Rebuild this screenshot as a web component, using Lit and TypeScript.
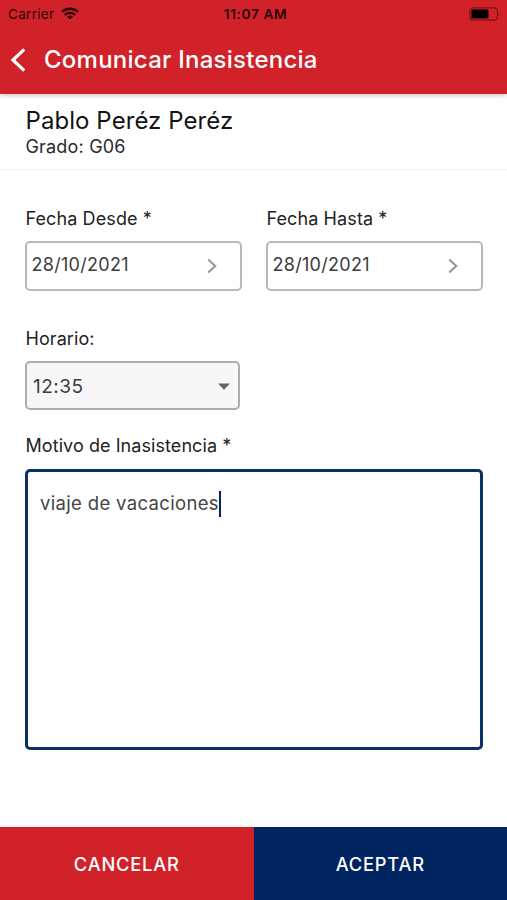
import { LitElement, html, css } from "lit";
import { customElement, property } from "lit/decorators.js";

@customElement("date-field")
class DateField extends LitElement {
  @property() label = "";
  @property() value = "";
  static styles = css`
    :host { display: block; width: 217px; }
    .label { height: 24px; padding: 1px 0 0 0.5px; line-height: 24px; font-size: 18px; color: #222; white-space: nowrap; letter-spacing: 0.1px; }
    .box {
      box-sizing: border-box; display: flex; align-items: center; justify-content: space-between;
      height: 50px; margin-top: 10px; padding: 0 21px 0 4px;
      border: 2px solid #b9b9b9; border-radius: 5px; background: #fff;
    }
    .value { font-size: 18px; line-height: 24px; color: #3c3c3c; padding: 0 0 2px 0.5px; letter-spacing: 0.3px; }
    svg { display: block; }
  `;
  render() {
    return html`
      <div class="label">${this.label}</div>
      <div class="box">
        <span class="value">${this.value}</span>
        <svg width="14" height="16" viewBox="0 0 14 16" fill="none" stroke="#969696" stroke-width="2.1">
          <path d="M3.2 1.5L10.2 8L3.2 14.5" />
        </svg>
      </div>
    `;
  }
}

@customElement("app-root")
class AppRoot extends LitElement {
  static styles = css`
    :host {
      display: flex; flex-direction: column; width: 507px; height: 900px; overflow: hidden;
      background: #fff; font-family: Inter, "Liberation Sans", sans-serif; color: #222;
    }
    svg { display: block; }
    header { flex: none; height: 94px; background: #d12229; box-shadow: 0 1px 5px rgba(0, 0, 0, 0.25); }
    .status {
      display: grid; grid-template-columns: 1fr auto 1fr; align-items: center;
      height: 28px; padding: 0 6px 0 8px; color: #2b0507; font-size: 13.5px; line-height: 18px;
    }
    .carrier { display: flex; align-items: center; gap: 7px; letter-spacing: 0.3px; }
    .carrier svg { margin-bottom: 1px; }
    .time { padding-left: 2px; font-size: 13.7px; font-weight: 600; letter-spacing: 0.6px; }
    .battery { justify-self: end; margin-bottom: 1px; }
    .bar { display: flex; align-items: center; height: 64px; padding-left: 9px; color: #fff; }
    .title { margin-left: 17px; font-size: 24px; font-weight: 500; line-height: 30px; white-space: nowrap; letter-spacing: 0.25px; }
    .student { flex: none; box-sizing: border-box; height: 76px; padding: 13px 25.5px 0; border-bottom: 1px solid #f0f0f0; }
    .name { height: 28px; line-height: 28px; font-size: 24px; color: #141414; letter-spacing: 0.07px; }
    .grade { height: 22px; line-height: 23px; font-size: 18px; color: #2a2a2a; letter-spacing: 0.18px; }
    form { flex: 1; padding: 36px 24px 0 25px; }
    .dates { display: flex; justify-content: space-between; }
    .label { height: 24px; line-height: 24px; font-size: 18px; white-space: nowrap; padding-left: 0.5px; letter-spacing: 0.07px; }
    .hour { margin-top: 36px; }
    .select {
      box-sizing: border-box; display: flex; align-items: center; justify-content: space-between;
      width: 215px; height: 49px; margin-top: 10px; padding: 0 8px 0 6px;
      border: 2px solid #adadad; border-radius: 5px; background: #f7f7f7; font-size: 19px; letter-spacing: 0.5px; color: #3c3c3c;
    }
    .select span { padding-top: 1px; }
    .select svg { margin-top: 1px; }
    .reason { margin-top: 24px; }
    .area {
      box-sizing: border-box; display: flex; height: 281px; margin-top: 11px; padding: 19px 12px;
      border: 3px solid #0d2f68; border-radius: 5px; font-size: 18.5px; letter-spacing: 0.34px; line-height: 25px; color: #444;
    }
    .caret { width: 2px; height: 26px; background: #032660; }
    footer { flex: none; display: flex; height: 73px; }
    .btn {
      flex: 1; display: flex; align-items: center; justify-content: center; padding-top: 1px; box-sizing: border-box;
      font-size: 18.3px; font-weight: 500; color: #fff; letter-spacing: 0.8px;
    }
    .cancel { background: #d12229; }
    .accept { background: #002561; }
  `;
  render() {
    return html`
      <header>
        <div class="status">
          <span class="carrier">
            <span>Carrier</span>
            <svg width="18" height="13" viewBox="0 0 18 13" fill="none" stroke="#2b0507" stroke-width="2.3">
              <path d="M1 4.9C5.6 .7 12.4 .7 17 4.9" />
              <path d="M3.8 7.8C6.8 5.1 11.2 5.1 14.2 7.8" />
              <path d="M6 9.6Q9 7.2 12 9.6L9 12.6Z" fill="#2b0507" stroke="none" />
            </svg>
          </span>
          <span class="time">11:07 AM</span>
          <svg class="battery" width="32" height="14" viewBox="0 0 32 14">
            <rect x=".8" y=".8" width="27.6" height="12.4" rx="3.4" fill="none" stroke="#7d1419" stroke-width="1.2" />
            <rect x="2.4" y="2.4" width="17" height="9.2" rx="1.2" fill="#000" />
            <path d="M29.8 4.8Q31.6 7 29.8 9.2Z" fill="#7d1419" />
          </svg>
        </div>
        <div class="bar">
          <svg width="18" height="26" viewBox="0 0 18 26" fill="none" stroke="#fff" stroke-width="3.2">
            <path d="M15.2 2.4L4 13L15.2 23.6" />
          </svg>
          <span class="title">Comunicar Inasistencia</span>
        </div>
      </header>
      <section class="student">
        <div class="name">Pablo Peréz Peréz</div>
        <div class="grade">Grado: G06</div>
      </section>
      <form>
        <div class="dates">
          <date-field label="Fecha Desde *" value="28/10/2021"></date-field>
          <date-field label="Fecha Hasta *" value="28/10/2021"></date-field>
        </div>
        <div class="label hour">Horario:</div>
        <div class="select">
          <span>12:35</span>
          <svg width="12" height="7" viewBox="0 0 12 7"><path d="M0 .5H12L6 6.7Z" fill="#666" /></svg>
        </div>
        <div class="label reason">Motivo de Inasistencia *</div>
        <div class="area"><span>viaje de vacaciones</span><span class="caret"></span></div>
      </form>
      <footer>
        <div class="btn cancel">CANCELAR</div>
        <div class="btn accept">ACEPTAR</div>
      </footer>
    `;
  }
}
